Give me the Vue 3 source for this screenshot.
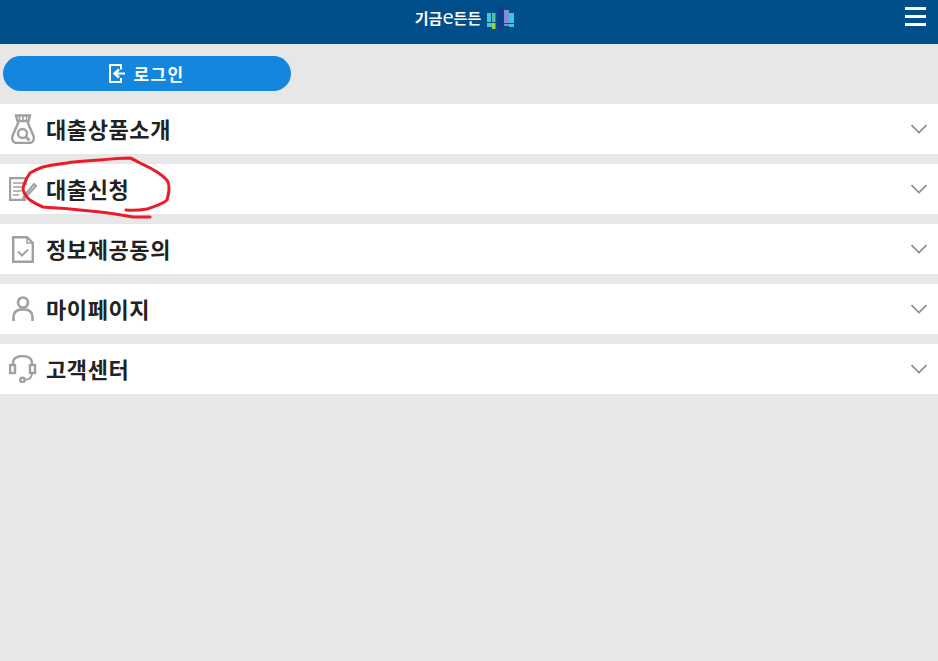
<script setup>
const menus = [
  { name: '대출상품소개', icon: 'bag' },
  { name: '대출신청', icon: 'form' },
  { name: '정보제공동의', icon: 'doc' },
  { name: '마이페이지', icon: 'user' },
  { name: '고객센터', icon: 'headset' }
]
</script>

<template>
  <div class="page">
    <header class="top">
      <div class="brand">
        <span class="brand-name">기금<em>e</em>든든</span>
        <svg class="brand-logo" width="28" height="26" viewBox="0 0 28 26">
          <rect x="0" y="8" width="4" height="9" fill="#3cc4e0" />
          <rect x="0" y="18" width="5" height="4" fill="#3cc4e0" />
          <rect x="5" y="8" width="3.500" height="9" fill="#55c0a0" />
          <rect x="5" y="18" width="3.500" height="6" fill="#a4d037" />
          <rect x="11" y="1" width="6" height="24" fill="#0d3f8e" />
          <rect x="17" y="5" width="5" height="13" fill="#7f8fd6" />
          <rect x="17" y="19" width="5" height="2" fill="#7f8fd6" />
          <rect x="22" y="8" width="5" height="10" fill="#3cc4e0" />
          <rect x="22" y="19" width="5" height="3" fill="#3cc4e0" />
        </svg>
      </div>
      <button class="burger" aria-label="menu">
        <i></i><i></i><i></i>
      </button>
    </header>

    <div class="login-wrap">
      <button class="login">
        <svg width="16" height="19" viewBox="0 0 16 19" fill="none" stroke="#fff" stroke-width="2">
          <path d="M12 5.500V1H1V18H12V14" />
          <path d="M16 9.500H6" />
          <path d="M10 5.500L5.500 9.500L10 13.500" stroke-width="2.400" />
        </svg>
        <span>로그인</span>
      </button>
    </div>

    <nav class="menu">
      <a v-for="m in menus" :key="m.name" class="row">
        <span class="ico">
          <svg v-if="m.icon === 'bag'" width="26" height="30" viewBox="0 0 26 30" fill="none" stroke="#a0a0a0" stroke-width="2.400">
            <path d="M6 1.500H20L18.500 7H7.500Z" />
            <path d="M9.500 1.500V7M13 1.500V7M16.500 1.500V7" stroke-width="1.500" />
            <path d="M8.500 8L2.500 22C1.500 26 3 29 7 29H19C23 29 24.500 26 23.500 22L17.500 8" />
            <circle cx="12.500" cy="19.500" r="4.500" />
            <path d="M16 23L19.500 26.500" stroke-width="2.800" />
          </svg>
          <svg v-else-if="m.icon === 'form'" width="28" height="24" viewBox="0 0 28 24" fill="none" stroke="#a0a0a0" stroke-width="2.400">
            <path d="M17 23H1V1H17V8" />
            <path d="M4 6H14M4 10H14M4 14H12M4 18H10" stroke-width="1.600" />
            <path d="M15 19L25 7L27 9L17 20L14 22Z" stroke-width="2" />
          </svg>
          <svg v-else-if="m.icon === 'doc'" width="22" height="27" viewBox="0 0 22 27" fill="none" stroke="#a0a0a0" stroke-width="2.400">
            <path d="M15 1.200H1.200V25.800H20.800V7Z" />
            <path d="M15 1V7H21" stroke-width="1.600" />
            <path d="M6 15.500L10 19.500L16 13.500" stroke-width="2" />
          </svg>
          <svg v-else-if="m.icon === 'user'" width="22" height="26" viewBox="0 0 22 26" fill="none" stroke="#a0a0a0" stroke-width="2.600">
            <circle cx="11" cy="6.500" r="5" />
            <path d="M1.500 25V21C1.500 16.500 5 13.500 9 13.500H13C17 13.500 20.500 16.500 20.500 21V25" />
          </svg>
          <svg v-else width="28" height="28" viewBox="0 0 28 28" fill="none" stroke="#a0a0a0" stroke-width="2.400">
            <rect x="1" y="10" width="5" height="8" />
            <rect x="21" y="10" width="5" height="8" />
            <path d="M4 10V8C4 3.500 8 1 13.500 1C19 1 23 3.500 23 8V10" />
            <path d="M23 18C23 22 21 24.500 16 25" stroke-width="1.800" />
            <circle cx="13.500" cy="25" r="2.200" />
          </svg>
        </span>
        <span class="label">{{ m.name }}</span>
        <svg class="chev" width="16" height="10" viewBox="0 0 16 10" fill="none" stroke="#8a8a8a" stroke-width="1.600">
          <path d="M0.500 1L8 8.500L15.500 1" />
        </svg>
      </a>
    </nav>

    <!-- 빨간 펜 표시 -->
    <svg class="scribble" width="938" height="661" viewBox="0 0 938 661" fill="none" stroke="#ea1c2c" stroke-width="3" stroke-linecap="round" stroke-linejoin="round">
      <path d="M126 210C134 211 141 210 147 209C156 206 163 204 167 200C169 193 170 187 168 182C165 177 161 175 157 172C151 168 146 166 140 163C136 161 133 159 130 158C120 158 110 159 100 160C88 161 78 161 67 163C58 164 50 165 43 167C37 169 33 171 30 173C26 179 23 185 23 190C25 195 27 198 30 200C34 203 38 205 43 207C52 208 61 208 70 209C80 210 90 211 100 212C111 213 122 215 133 217C139 217 145 217 150 217" />
    </svg>
  </div>
</template>

<style scoped>
.page {
  position: relative;
  min-height: 661px;
  background: #e7e7e7;
  font-family: "Noto Sans CJK KR", "Noto Sans", sans-serif;
}
.top {
  position: relative;
  height: 44px;
  background: #004f8a;
  display: flex;
  justify-content: center;
  align-items: flex-start;
}
.brand {
  display: flex;
  align-items: center;
  height: 32px;
  gap: 6px;
  margin-top: 2px;
  margin-left: -8px;
}
.brand-name {
  color: #fff;
  font-size: 15px;
  font-weight: 700;
  line-height: 32px;
  white-space: nowrap;
}
.brand-name em {
  font-family: "Open Sans", sans-serif;
  font-style: normal;
  font-size: 20px;
  font-weight: 400;
  line-height: 20px;
}
.burger {
  position: absolute;
  top: 7px;
  right: 12px;
  width: 21px;
  padding: 0;
  border: 0;
  background: none;
  display: flex;
  flex-direction: column;
  gap: 5px;
}
.burger i {
  display: block;
  height: 3px;
  background: #fff;
}
.login-wrap {
  padding: 12px 647px 13px 3px;
}
.login {
  width: 288px;
  height: 35px;
  border: 0;
  border-radius: 18px;
  background: #1486dd;
  color: #fff;
  font-family: inherit;
  font-size: 17px;
  font-weight: 700;
  letter-spacing: 1.400px;
  display: flex;
  align-items: center;
  justify-content: center;
  gap: 8px;
  padding: 0 0 1px;
}
.menu {
  display: flex;
  flex-direction: column;
  gap: 10px;
}
.row {
  height: 50px;
  background: #fff;
  display: flex;
  align-items: center;
  padding: 0 11px 0 9px;
}
.ico {
  width: 28px;
  margin-right: 9px;
  flex: none;
  display: flex;
  align-items: center;
  justify-content: center;
}
.label {
  flex: 1;
  font-size: 22px;
  font-weight: 700;
  letter-spacing: 0.600px;
  padding-bottom: 3px;
  color: #222;
}
.chev {
  flex: none;
}
.scribble {
  position: absolute;
  left: 0;
  top: 0;
  pointer-events: none;
}
</style>

<style>
body {
  margin: 0;
}
</style>
